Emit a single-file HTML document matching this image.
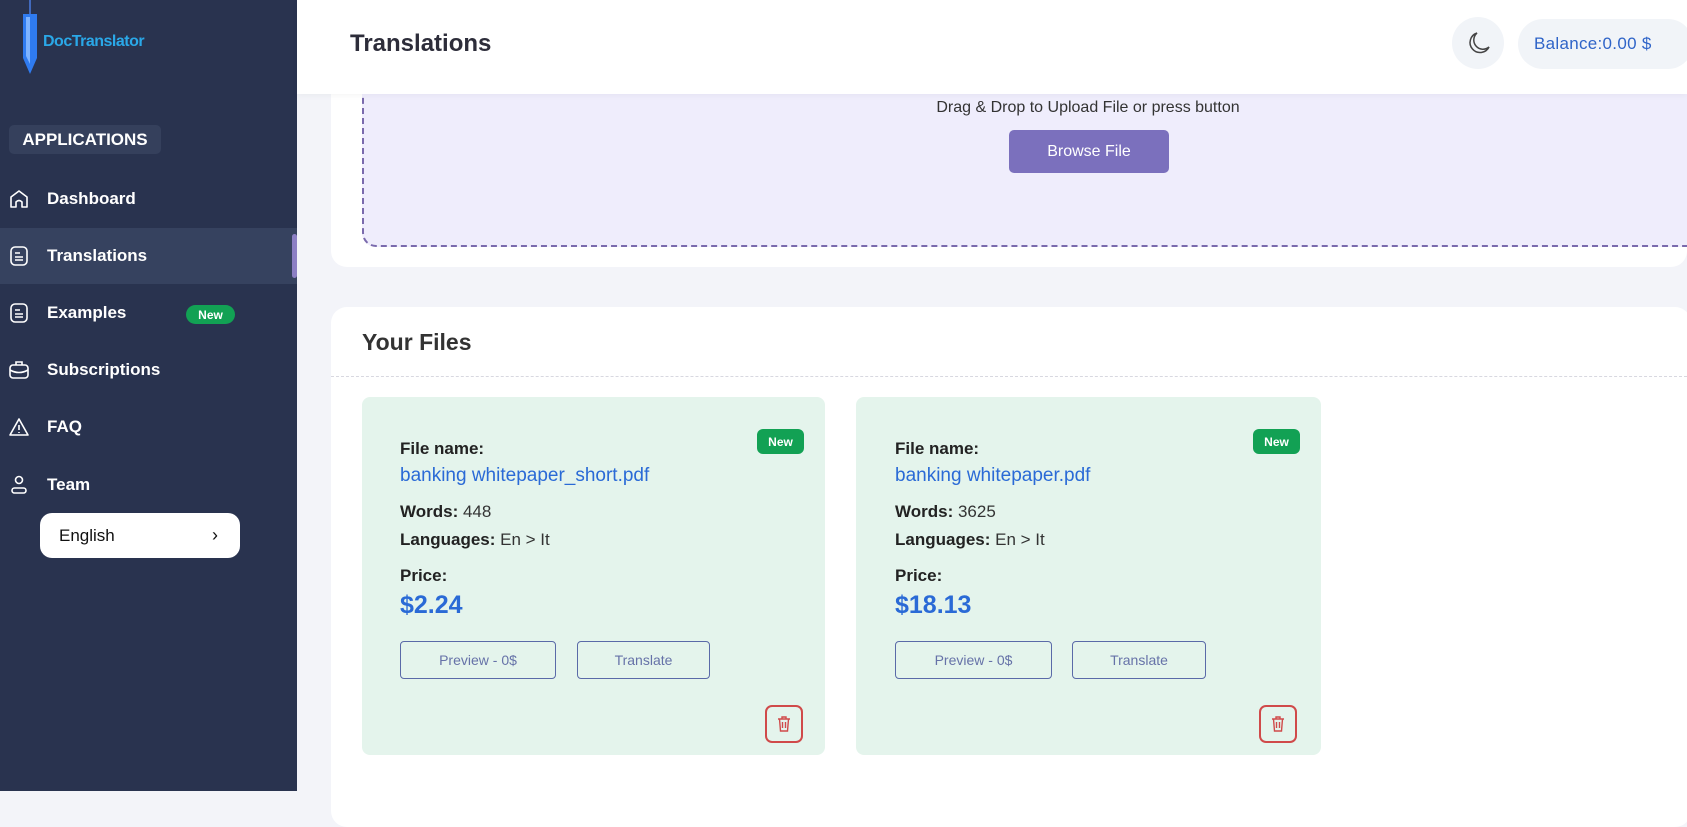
<!DOCTYPE html>
<html><head><meta charset="utf-8"><style>
*{box-sizing:border-box;margin:0;padding:0}
body{width:1687px;height:791px;overflow:hidden;background:#f3f4f9;font-family:"Liberation Sans",sans-serif;position:relative}
.a{position:absolute}
.sb{left:0;top:0;width:297px;height:791px;background:#29334f}
.nav{left:0;width:297px;height:56px;display:flex;align-items:center;color:#fff;font-weight:bold;font-size:17px}
.nav svg{position:absolute;left:8px}
.nav span{position:absolute;left:47px}
.card{background:#e4f4ec;border-radius:8px}
.lbl{font-weight:bold;font-size:17px;color:#222}
.val{font-size:17px;color:#333;font-weight:normal}
.btn{border:1px solid #5a6aa8;border-radius:4px;color:#6672a8;font-size:14px;display:flex;align-items:center;justify-content:center;height:38px}
.new{background:#12a154;color:#fff;font-size:12px;font-weight:bold;border-radius:6px;display:flex;align-items:center;justify-content:center}
.trash{border:2px solid #d04a4a;border-radius:7px;width:38px;height:38px;display:flex;align-items:center;justify-content:center}
</style></head><body>
<div class="a sb"></div>
<!-- logo -->
<svg class="a" style="left:17px;top:0" width="26" height="76" viewBox="0 0 26 76"><line x1="13" y1="0" x2="13" y2="14" stroke="#4a7ce0" stroke-width="1.5"/><path d="M6 14 L20 14 L20 58 L13 74 L6 58Z" fill="#2f7bf0"/><path d="M9 17 L13 17 L13 64 L9 56Z" fill="#7fb4ff"/></svg>
<div class="a" style="left:43px;top:33px;color:#2aa8e8;font-weight:bold;font-size:16px;letter-spacing:-0.5px">DocTranslator</div>
<div class="a" style="left:9px;top:125px;width:152px;height:29px;background:#35405c;border-radius:5px;color:#fff;font-weight:bold;font-size:17px;display:flex;align-items:center;justify-content:center">APPLICATIONS</div>
<div class="a" style="left:0;top:228px;width:297px;height:56px;background:#36425f"></div>
<div class="a" style="left:292px;top:234px;width:5px;height:44px;background:#8c7fc4;border-radius:3px"></div>
<div class="a nav" style="top:171px"><svg width="22" height="22" viewBox="0 0 22 22" fill="none" stroke="#fff" stroke-width="1.6"><path d="M3 19V9L11 3L19 9V19H14V14Q11 11 8 14V19Z" stroke-linejoin="round"/></svg><span>Dashboard</span></div>
<div class="a nav" style="top:228px"><svg width="22" height="22" viewBox="0 0 22 22" fill="none" stroke="#fff" stroke-width="1.6"><rect x="3" y="2" width="16" height="18" rx="4"/><path d="M7 8h5M7 12h8M7 15h8"/></svg><span>Translations</span></div>
<div class="a nav" style="top:285px"><svg width="22" height="22" viewBox="0 0 22 22" fill="none" stroke="#fff" stroke-width="1.6"><rect x="3" y="2" width="16" height="18" rx="4"/><path d="M7 8h5M7 12h8M7 15h8"/></svg><span>Examples</span></div>
<div class="a new" style="left:186px;top:305px;width:49px;height:19px;border-radius:10px">New</div>
<div class="a nav" style="top:342px"><svg width="22" height="22" viewBox="0 0 22 22" fill="none" stroke="#fff" stroke-width="1.6"><rect x="2" y="6" width="18" height="13" rx="3"/><path d="M8 6V3h6v3M2 11q9 5 18 0"/></svg><span>Subscriptions</span></div>
<div class="a nav" style="top:399px"><svg width="22" height="22" viewBox="0 0 22 22" fill="none" stroke="#fff" stroke-width="1.6"><path d="M11 3L20 19H2Z" stroke-linejoin="round"/><path d="M11 9v5M11 16v1"/></svg><span>FAQ</span></div>
<div class="a nav" style="top:457px"><svg width="22" height="22" viewBox="0 0 22 22" fill="none" stroke="#fff" stroke-width="1.6"><circle cx="11" cy="6" r="3.5"/><rect x="4" y="14" width="14" height="5" rx="2.5"/></svg><span>Team</span></div>
<div class="a" style="left:40px;top:513px;width:200px;height:45px;background:#fff;border-radius:12px;font-size:17px;color:#111;display:flex;align-items:center;padding-left:19px">English<span style="position:absolute;right:22px;font-size:18px">›</span></div>

<!-- main -->
<div class="a" style="left:331px;top:60px;width:1356px;height:207px;background:#fff;border-radius:16px"></div>
<div class="a" style="left:362px;top:40px;width:1340px;height:207px;background:#efedfc;border:2px dashed #7a6aad;border-radius:14px"></div>
<div class="a" style="left:362px;top:99px;width:1452px;text-align:center;font-size:16px;color:#333">Drag &amp; Drop to Upload File or press button</div>
<div class="a" style="left:1009px;top:130px;width:160px;height:43px;background:#7b70bd;border-radius:5px;color:#fff;font-size:16px;display:flex;align-items:center;justify-content:center">Browse File</div>
<div class="a" style="left:297px;top:0;width:1390px;height:94px;background:#fff;box-shadow:0 2px 6px rgba(0,0,0,0.04)"></div>
<div class="a" style="left:350px;top:30px;font-size:24px;font-weight:bold;color:#2d2d3a">Translations</div>
<div class="a" style="left:1452px;top:17px;width:52px;height:52px;border-radius:50%;background:#f1f4f8"></div>
<svg class="a" style="left:1466px;top:30px" width="26" height="26" viewBox="0 0 26 26" fill="none" stroke="#444" stroke-width="1.5"><path d="M11 3A10 10 0 1 0 23 17A8 8 0 0 1 11 3Z"/></svg>
<div class="a" style="left:1518px;top:19px;width:175px;height:50px;border-radius:25px;background:#f1f4f8;color:#2f64c8;font-size:17px;display:flex;align-items:center;padding-left:16px;letter-spacing:0.3px">Balance:0.00 $</div>

<div class="a" style="left:331px;top:307px;width:1360px;height:520px;background:#fff;border-radius:16px"></div>
<div class="a" style="left:362px;top:329px;font-size:23px;font-weight:bold;color:#333">Your Files</div>
<div class="a" style="left:331px;top:376px;width:1356px;border-top:1px dashed #d8d8e0"></div>

<div class="a card" style="left:362px;top:397px;width:463px;height:358px"></div>
<div class="a card" style="left:856px;top:397px;width:465px;height:358px"></div>

<div class="a" style="left:400px;top:439px">
<div class="lbl">File name:</div>
<div style="font-size:19px;color:#2a6ad6;margin-top:6px">banking whitepaper_short.pdf</div>
<div class="lbl" style="margin-top:15px">Words: <span class="val">448</span></div>
<div class="lbl" style="margin-top:8px">Languages: <span class="val">En &gt; It</span></div>
<div class="lbl" style="margin-top:16px">Price:</div>
<div style="font-size:25px;font-weight:bold;color:#2a6ad6;margin-top:5px">$2.24</div>
</div>
<div class="a btn" style="left:400px;top:641px;width:156px">Preview - 0$</div>
<div class="a btn" style="left:577px;top:641px;width:133px">Translate</div>
<div class="a new" style="left:757px;top:429px;width:47px;height:25px">New</div>
<div class="a trash" style="left:765px;top:705px"><svg width="14" height="16" viewBox="0 0 14 16" fill="none" stroke="#d04a4a" stroke-width="1.4"><path d="M1 3h12M5 3V1h4v2M2.5 3l1 12h7l1-12M5.5 6v6M8.5 6v6"/></svg></div>

<div class="a" style="left:895px;top:439px">
<div class="lbl">File name:</div>
<div style="font-size:19px;color:#2a6ad6;margin-top:6px">banking whitepaper.pdf</div>
<div class="lbl" style="margin-top:15px">Words: <span class="val">3625</span></div>
<div class="lbl" style="margin-top:8px">Languages: <span class="val">En &gt; It</span></div>
<div class="lbl" style="margin-top:16px">Price:</div>
<div style="font-size:25px;font-weight:bold;color:#2a6ad6;margin-top:5px">$18.13</div>
</div>
<div class="a btn" style="left:895px;top:641px;width:157px">Preview - 0$</div>
<div class="a btn" style="left:1072px;top:641px;width:134px">Translate</div>
<div class="a new" style="left:1253px;top:429px;width:47px;height:25px">New</div>
<div class="a trash" style="left:1259px;top:705px"><svg width="14" height="16" viewBox="0 0 14 16" fill="none" stroke="#d04a4a" stroke-width="1.4"><path d="M1 3h12M5 3V1h4v2M2.5 3l1 12h7l1-12M5.5 6v6M8.5 6v6"/></svg></div>
</body></html>
